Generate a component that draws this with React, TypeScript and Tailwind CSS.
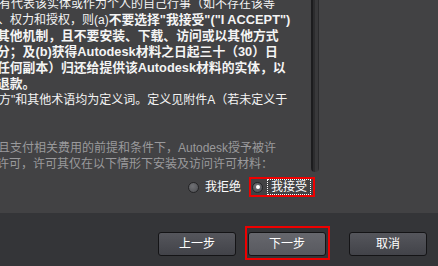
import React from "react";

const FONT = {
  fontFamily: '"Liberation Sans", "Noto Sans CJK SC", sans-serif',
};

function Line({
  children,
  className = "",
}: {
  children?: React.ReactNode;
  className?: string;
}) {
  return (
    <div className={`h-[16px] leading-[16px] whitespace-nowrap ${className}`}>
      {children}
    </div>
  );
}

function B({ children }: { children: React.ReactNode }) {
  return <span className="font-bold text-[12.8px]">{children}</span>;
}

function Radio({ checked }: { checked?: boolean }) {
  return (
    <span className="flex h-[11px] w-[11px] shrink-0 items-center justify-center rounded-full border border-[#242426] bg-[radial-gradient(circle_at_40%_35%,#707175,#4c4d51)]">
      {checked && <span className="h-[4px] w-[4px] rounded-full bg-white" />}
    </span>
  );
}

function Btn({
  children,
  active,
}: {
  children: React.ReactNode;
  active?: boolean;
}) {
  return (
    <button
      className={`flex h-[24px] w-[78px] items-center justify-center rounded-[3px] border border-[#141416] text-[12px] text-white ${
        active
          ? "bg-gradient-to-b from-[#66676d] to-[#58595f]"
          : "bg-gradient-to-b from-[#55565c] to-[#424349]"
      }`}
      style={FONT}
    >
      {children}
    </button>
  );
}

export default function App() {
  return (
    <div className="h-[266px] w-[438px] overflow-hidden" style={FONT}>
      <div className="flex h-[213px] flex-col bg-[#424244]">
        <div className="flex h-[172px]">
          <div className="h-full w-[311px] overflow-hidden text-[12px] text-[#f4f4f4]">
            <div className="ml-[-2px] mt-[-4px]">
              <Line className="ml-[1px]">有代表该实体或作为个人的自己行事（如不存在该等</Line>
              <Line>
                、权力和授权，则(a)
                <B>不要选择"我接受"("I ACCEPT")</B>
              </Line>
              <Line className="ml-[-1px]">
                <B>其他机制，且不要安装、下载、访问或以其他方式</B>
              </Line>
              <Line className="ml-[-1px]">
                <B>分；及(b)获得Autodesk材料之日起三十（30）日</B>
              </Line>
              <Line className="ml-[-1px]">
                <B>任何副本）归还给提供该Autodesk材料的实体，以</B>
              </Line>
              <Line className="ml-[-1px]">
                <B>退款。</B>
              </Line>
              <Line className="ml-[1px]">方"和其他术语均为定义词。定义见附件A（若未定义于</Line>
              <Line />
              <Line />
              <Line className="text-[#9a9a9c]">且支付相关费用的前提和条件下，Autodesk授予被许</Line>
              <Line className="ml-[-1px] text-[#9a9a9c]">许可，许可其仅在以下情形下安装及访问许可材料：</Line>
            </div>
          </div>
          <div className="h-full w-[8px] rounded-b-[4px] bg-[linear-gradient(to_right,#1c1c1e_0px,#1c1c1e_2px,#2c2c2e_2px,#2c2c2e_4px,#39393b_4px,#39393b_7px,#2a2a2c_7px)]" />
        </div>
        <div className="mt-[5px] flex items-center justify-end pr-[123px] text-[12px] text-white">
          <Radio />
          <span className="ml-[6px] leading-[16px]">我拒绝</span>
          <div className="ml-[8px] flex h-[20px] items-center border-2 border-[#ee0000] pl-[1px] pr-[2px]">
            <Radio checked />
            <span className="ml-[4px] flex h-[16px] w-[44px] items-center justify-center border border-dotted border-white leading-[14px]">
              我接受
            </span>
          </div>
        </div>
      </div>
      <div className="flex h-[53px] items-start bg-[#343538] pl-[158px] pt-[19px]">
        <Btn>上一步</Btn>
        <div className="relative ml-[12px]">
          <Btn active>下一步</Btn>
          <div className="pointer-events-none absolute bottom-[-4px] left-[-3px] right-[-4px] top-[-6px] border-2 border-[#ee0000]" />
        </div>
        <div className="ml-[23px]">
          <Btn>取消</Btn>
        </div>
      </div>
    </div>
  );
}
